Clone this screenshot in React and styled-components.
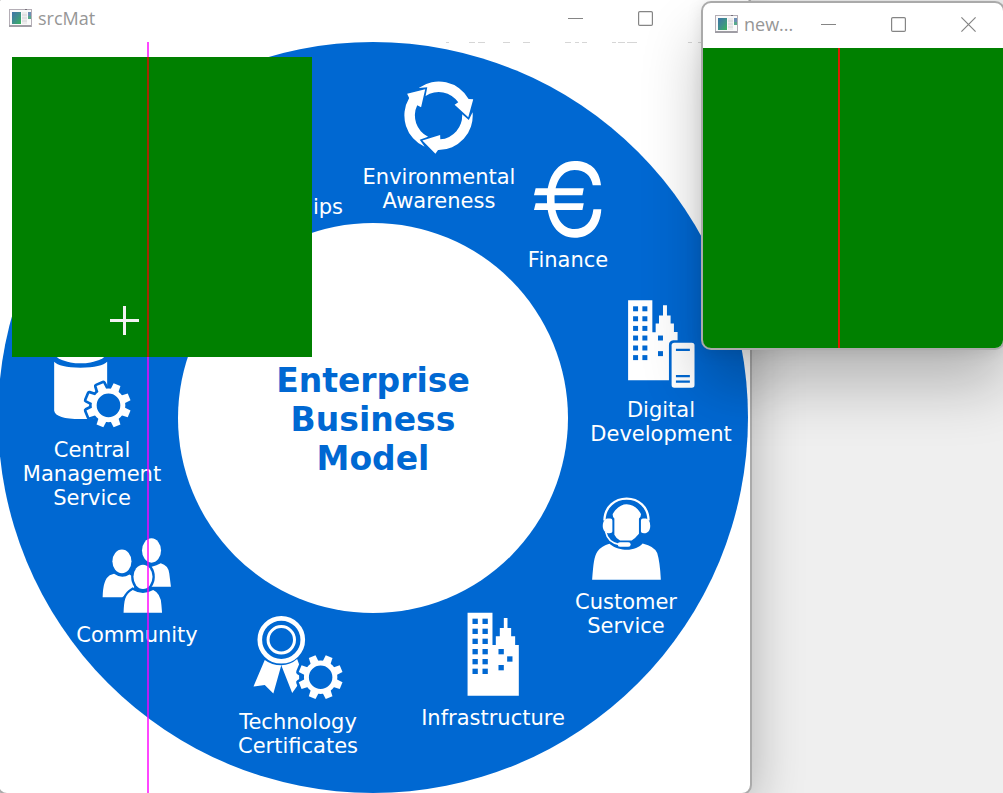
import React from "react";
import styled, { createGlobalStyle } from "styled-components";

const BLUE = "#0068d2";

const GlobalStyle = createGlobalStyle`
  * {
    box-sizing: border-box;
  }
  body {
    margin: 0;
    background-color: #efefef;
    font-family: "Open Sans", "Noto Sans", sans-serif;
  }
`;

const DesktopStyled = styled.main`
  position: relative;
  min-height: 100vh;
  overflow: hidden;
`;

const WindowStyled = styled.section`
  position: absolute;
  left: ${(props) => props.$x}px;
  top: ${(props) => props.$y}px;
  border: 2px solid #aaaaaa;
  border-radius: 10px;
  background-color: #ffffff;
  background-clip: padding-box;
  overflow: hidden;
  box-shadow: ${(props) =>
    props.$active
      ? "0 36px 60px rgba(0, 0, 0, 0.24), 0 2px 16px rgba(0, 0, 0, 0.1)"
      : "0 12px 52px rgba(0, 0, 0, 0.28)"};
`;

const TitleBarStyled = styled.header`
  display: flex;
  align-items: center;
  height: 45px;
  padding: 0 0 3px ${(props) => (props.$active ? 12 : 10)}px;
`;

const TitleStyled = styled.h2`
  flex: 1;
  margin: 0 0 0 6px;
  font-size: 18px;
  font-weight: 400;
  line-height: 24px;
  color: #969696;
`;

const ControlStyled = styled.button`
  display: flex;
  align-items: center;
  justify-content: center;
  width: 70px;
  height: 42px;
  padding: 0;
  border: 0;
  background: none;
  color: #858585;
`;

const CanvasStyled = styled.div`
  position: relative;
  padding-right: 2px;
  font-family: Verdana, "DejaVu Sans", sans-serif;
`;

const RingStyled = styled.div`
  display: flex;
  align-items: center;
  justify-content: center;
  width: 750px;
  height: 751px;
  margin-left: -1px;
  border-radius: 50%;
  background-color: ${BLUE};
`;

const HubStyled = styled.div`
  display: flex;
  align-items: center;
  justify-content: center;
  width: 52%;
  aspect-ratio: 1;
  border-radius: 50%;
  background-color: #ffffff;
`;

const HubTitleStyled = styled.h1`
  margin: 0;
  padding-top: 4px;
  font-size: 33px;
  line-height: 39px;
  text-align: center;
  color: ${BLUE};
`;

const SegmentStyled = styled.div`
  position: absolute;
  left: ${(props) => props.$x}px;
  top: ${(props) => props.$y}px;
  display: flex;
  flex-direction: column;
  align-items: center;
  gap: 10px;
  transform: translateX(-50%);
`;

const LabelStyled = styled.span`
  font-size: 21px;
  line-height: 24px;
  text-align: center;
  white-space: pre-line;
  color: #ffffff;
`;

const PatchStyled = styled.div`
  display: flex;
  width: 300px;
  height: 300px;
  padding-left: 135px;
  background-color: #008000;
`;

const PatchLineStyled = styled.div`
  width: 2px;
  background-color: ${(props) => props.color};
`;

const SelectionStyled = styled.div`
  position: absolute;
  left: 13px;
  top: 15px;
`;

const GuideStyled = styled.div`
  position: absolute;
  left: 148px;
  top: 0;
  bottom: 0;
  width: 2px;
  background-color: rgba(255, 0, 255, 0.72);
`;

const CrossStyled = styled.svg`
  position: absolute;
  left: 98px;
  top: 249px;
`;

const ScrapStyled = styled.svg`
  position: absolute;
  left: 0;
  top: 0;
`;

const AppIcon = () => (
  <svg width="23" height="18" viewBox="0 0 23 18" aria-hidden="true">
    <defs>
      <linearGradient id="thumb" x1="0" y1="0" x2="1" y2="1">
        <stop offset="0" stopColor="#3f73a8" />
        <stop offset="0.5" stopColor="#3f8f8c" />
        <stop offset="1" stopColor="#38b45c" />
      </linearGradient>
    </defs>
    <rect width="23" height="18" fill="#b4aeb6" />
    <rect x="1" y="1" width="21" height="15" fill="#fafafa" />
    <rect y="16" width="22" height="2" fill="#9f9da4" />
    <rect x="16" width="2" height="1" fill="#75707a" />
    <rect x="3" y="3" width="9" height="12" fill="url(#thumb)" />
    <rect x="13" y="3" width="5" height="12" fill="#ececec" />
    <path d="M13 6h5M13 9h5M13 12h5" stroke="#d4d4d8" />
    <rect x="19" y="3" width="3" height="4" fill="#6c8fb4" />
    <rect x="19" y="7" width="3" height="3" fill="#58a98c" />
  </svg>
);

const MinimizeIcon = () => (
  <svg width="15" height="15" viewBox="0 0 15 15" aria-hidden="true">
    <path d="M0 7.5h15" stroke="currentColor" />
  </svg>
);

const MaximizeIcon = () => (
  <svg width="15" height="15" viewBox="0 0 15 15" aria-hidden="true">
    <rect x="0.6" y="0.6" width="13.8" height="13.8" rx="1.2" fill="none" stroke="currentColor" strokeWidth="1.2" />
  </svg>
);

const CloseIcon = () => (
  <svg width="15" height="15" viewBox="0 0 15 15" aria-hidden="true">
    <path d="M0.4 0.4l14.2 14.2M14.6 0.4L0.4 14.6" stroke="currentColor" strokeWidth="1.2" />
  </svg>
);

const RECYCLE_ARROW =
  "M87 54L113 52L108 78A71 71 0 0 1 206 97L195 104L236 142L251 88L237 87A103 103 0 0 0 87 54Z";

const RecycleIcon = () => (
  <svg width="70" height="74" viewBox="42 33 210 222" fill="#fff" aria-hidden="true">
    {[0, 120, 240].map((n) => (
      <path key={n} d={RECYCLE_ARROW} transform={`rotate(${n} 147 137)`} />
    ))}
  </svg>
);

const EuroIcon = () => (
  <svg width="68" height="77" viewBox="431 272 204 232" fill="#fff" aria-hidden="true">
    <path d="M633 345C628 296 598 272 553 272C503 272 470 318 470 388C470 458 503 503 553 503C600 503 630 472 634 417H610C606 456 584 477 553 477C518 477 493 444 493 388C493 332 518 299 553 299C584 299 603 315 608 345Z" />
    <path d="M436 354H581L577 375H431ZM436 399H581L577 420H431Z" />
  </svg>
);

const Panes = ({ points, size }) =>
  points.map(([x, y]) => (
    <rect key={`${x}-${y}`} x={x} y={y} width={size} height={size} fill={BLUE} />
  ));

const DIGITAL_PANES = [50, 80, 109, 138, 168, 197]
  .flatMap((y) => [[129, y], [157, y]])
  .concat([[204, 138], [204, 185]]);

const DigitalIcon = () => (
  <svg width="68" height="88" viewBox="112 31 204 265" fill="#fff" aria-hidden="true">
    <path d="M114 32H187V128H197V102H207V78H219V47H231V78H242V102H252V127H263V152H250Q237 154 237 166V273H114Z" />
    <Panes points={DIGITAL_PANES} size={15} />
    <rect x="245" y="160" width="69" height="135" rx="8" />
    <path d="M258 181H300M258 260H300M258 277H300" stroke={BLUE} strokeWidth="7" />
  </svg>
);

const AgentIcon = () => (
  <svg width="69" height="83" viewBox="66 21 207 250" fill="#fff" aria-hidden="true">
    <path d="M103 92C104 50 135 26 170 26C205 26 235 50 236 92" fill="none" stroke="#fff" strokeWidth="7" />
    <path d="M128 72C140 52 155 43 170 43C187 43 204 54 213 72Q214 80 207 86V132Q196 146 185 152H150Q138 146 133 135V86Q127 80 128 72Z" />
    <path d="M112 86H121Q127 86 127 92V124Q127 130 118 130C105 130 98 120 98 108C98 95 104 88 112 86Z" />
    <path d="M228 86H219Q213 86 213 92V124Q213 130 222 130C235 130 241 120 241 108C241 95 236 88 228 86Z" />
    <path d="M107 126C111 147 127 160 147 164" fill="none" stroke="#fff" strokeWidth="5" />
    <rect x="143" y="157" width="39" height="14" rx="7" />
    <path d="M66 270C70 220 72 200 82 185Q95 168 118 162C135 176 155 180 170 180C190 180 210 172 218 161Q255 170 262 190Q270 215 273 270Z" />
  </svg>
);

const TOWER_PANES = [57, 87, 117, 148, 178, 207]
  .flatMap((y) => [[187, y], [217, y]])
  .concat([[265, 148], [291, 170], [265, 196]]);

const TowerIcon = () => (
  <svg width="52" height="84" viewBox="171 38 156 250" fill="#fff" aria-hidden="true">
    <path d="M172 39H247V136H257V110H269V85H281V55H292V85H303V110H315V136H326V288H172Z" />
    <Panes points={TOWER_PANES} size={16} />
  </svg>
);

const TEETH = [22.5, 67.5, 112.5, 157.5, 202.5, 247.5, 292.5, 337.5];

const Gear = ({ x, y }) => (
  <g transform={`translate(${x} ${y})`}>
    <circle r="58" fill={BLUE} />
    {TEETH.map((n) => (
      <path key={n} d="M-13 -42L-11 -67H11L13 -42Z" transform={`rotate(${n})`} stroke={BLUE} strokeWidth="16" strokeLinejoin="round" />
    ))}
    {TEETH.map((n) => (
      <path key={n} d="M-13 -42L-11 -67H11L13 -42Z" transform={`rotate(${n})`} />
    ))}
    <circle r="43" fill={BLUE} stroke="#fff" strokeWidth="15" />
  </g>
);

const CertificateIcon = () => (
  <svg width="90" height="84" viewBox="99 33 271 254" fill="#fff" aria-hidden="true">
    <path d="M134 166L100 246L134 242L160 267L184 182Q155 182 134 166Z" />
    <path d="M184 182L217 266L238 236V180L232 163Q212 181 184 182Z" />
    <Gear x={303} y={218} />
    <circle cx="184" cy="105" r="65" fill="none" stroke="#fff" strokeWidth="14" />
    <circle cx="184" cy="105" r="40" fill="none" stroke="#fff" strokeWidth="9" />
  </svg>
);

const PeopleIcon = () => (
  <svg width="69" height="75" viewBox="98 22 208 228" fill="#fff" aria-hidden="true">
    <ellipse cx="157" cy="93" rx="29" ry="36" />
    <ellipse cx="247" cy="60" rx="29" ry="37" />
    <path d="M98 202C100 165 105 145 120 135L133 131Q157 148 180 133L194 142V178L158 202Z" />
    <path d="M245 110L262 105L275 99Q298 105 301 130L306 170H244Z" />
    <path d="M162 249C164 210 165 195 190 180Q221 198 252 180Q275 190 277 225L279 249Z" stroke={BLUE} strokeWidth="14" />
    <ellipse cx="221" cy="140" rx="36" ry="45" fill={BLUE} />
    <path d="M162 249C164 210 165 195 190 180Q221 198 252 180Q275 190 277 225L279 249Z" />
    <ellipse cx="221" cy="140" rx="29" ry="37" />
  </svg>
);

const DatabaseIcon = () => (
  <svg width="77" height="87" viewBox="159 156 231 261" fill="#fff" aria-hidden="true">
    <ellipse cx="239" cy="190" rx="79" ry="33" />
    <path d="M160 218Q175 235 239 236Q303 235 319 218V365Q314 390 239 390Q165 390 160 365Z" />
    <Gear x={323} y={349} />
  </svg>
);

const segments = [
  { x: 440, y: 39, label: "Environmental\nAwareness", Icon: RecycleIcon },
  { x: 569, y: 119, label: "Finance", Icon: EuroIcon },
  { x: 662, y: 258, label: "Digital\nDevelopment", Icon: DigitalIcon },
  { x: 627, y: 455, label: "Customer\nService", Icon: AgentIcon },
  { x: 494, y: 570, label: "Infrastructure", Icon: TowerIcon },
  { x: 299, y: 574, label: "Technology\nCertificates", Icon: CertificateIcon },
  { x: 138, y: 496, label: "Community", Icon: PeopleIcon },
  { x: 93, y: 299, label: "Central\nManagement\nService", Icon: DatabaseIcon },
  { x: 329, y: 153, label: "ips" },
];

const Patch = ({ line }) => (
  <PatchStyled>
    <PatchLineStyled color={line} />
  </PatchStyled>
);

const Window = ({ title, x, y, active, children }) => (
  <WindowStyled $x={x} $y={y} $active={active}>
    <TitleBarStyled $active={active}>
      <AppIcon />
      <TitleStyled>{title}</TitleStyled>
      <ControlStyled type="button" aria-label="Minimize">
        <MinimizeIcon />
      </ControlStyled>
      <ControlStyled type="button" aria-label="Maximize">
        <MaximizeIcon />
      </ControlStyled>
      <ControlStyled type="button" aria-label="Close">
        <CloseIcon />
      </ControlStyled>
    </TitleBarStyled>
    {children}
  </WindowStyled>
);

const App = () => {
  return (
    <DesktopStyled>
      <GlobalStyle />
      <Window title="srcMat" x={-3} y={-5}>
        <CanvasStyled>
          <RingStyled>
            <HubStyled>
              <HubTitleStyled>
                Enterprise
                <br />
                Business
                <br />
                Model
              </HubTitleStyled>
            </HubStyled>
          </RingStyled>
          <ScrapStyled width="750" height="2" viewBox="0 0 750 2" aria-hidden="true">
            <path
              d="M447 0.5h3M470 0.5h6M479 0.5h7M504 0.5h7M524 0.5h7M566 0.5h6M576 0.5h4M583 0.5h5M613 0.5h4M619 0.5h7M628 0.5h10M689 0.5h4M699 0.5h4"
              stroke="#d6d6d6"
            />
          </ScrapStyled>
          {segments.map(({ x, y, label, Icon }) => (
            <SegmentStyled key={label} $x={x} $y={y}>
              {Icon && <Icon />}
              <LabelStyled>{label}</LabelStyled>
            </SegmentStyled>
          ))}
          <GuideStyled />
          <SelectionStyled>
            <Patch line="#a52a00" />
            <CrossStyled width="29" height="29" viewBox="0 0 29 29" aria-hidden="true">
              <path d="M0 14.5h29M14.5 0v29" stroke="#f2f2f2" strokeWidth="3" />
            </CrossStyled>
          </SelectionStyled>
        </CanvasStyled>
      </Window>
      <Window title="new..." x={701} y={1} active>
        <Patch line="#dc1c00" />
      </Window>
    </DesktopStyled>
  );
};

export default App;
